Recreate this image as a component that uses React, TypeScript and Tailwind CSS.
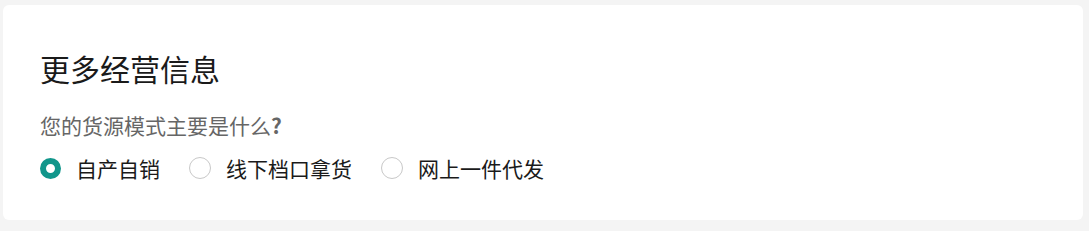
const options = ["自产自销", "线下档口拿货", "网上一件代发"];

function Radio({ checked }: { checked: boolean }) {
  if (checked) {
    return <span className="h-[21px] w-[21px] shrink-0 rounded-full border-[6px] border-[#11968b] bg-white" />;
  }
  return <span className="h-[22px] w-[22px] shrink-0 rounded-full border border-[#c8c8c8] bg-white" />;
}

export default function App() {
  return (
    <div
      className="min-h-[231px] bg-[#f4f4f4] pb-[11px] pl-[3px] pr-[6px] pt-[5px]"
      style={{ fontFamily: '"Noto Sans CJK SC", "Noto Sans", sans-serif' }}
    >
      <div className="h-[215px] rounded-md bg-white px-[37px] pt-[43px]">
        <h2 className="text-[30px] leading-[40px] text-[#1a1a1a]">更多经营信息</h2>
        <p className="mt-[23px] text-[21px] leading-[28px] text-[#666666]">
          您的货源模式主要是什么<span className="font-bold">?</span>
        </p>
        <div className="mt-[15px] flex items-center">
          {options.map((o, i) => (
            <label key={o} className="mr-[29px] flex items-center gap-[15px]">
              <Radio checked={i === 0} />
              <span className="text-[21px] leading-[28px] text-[#1a1a1a]">{o}</span>
            </label>
          ))}
        </div>
      </div>
    </div>
  );
}
